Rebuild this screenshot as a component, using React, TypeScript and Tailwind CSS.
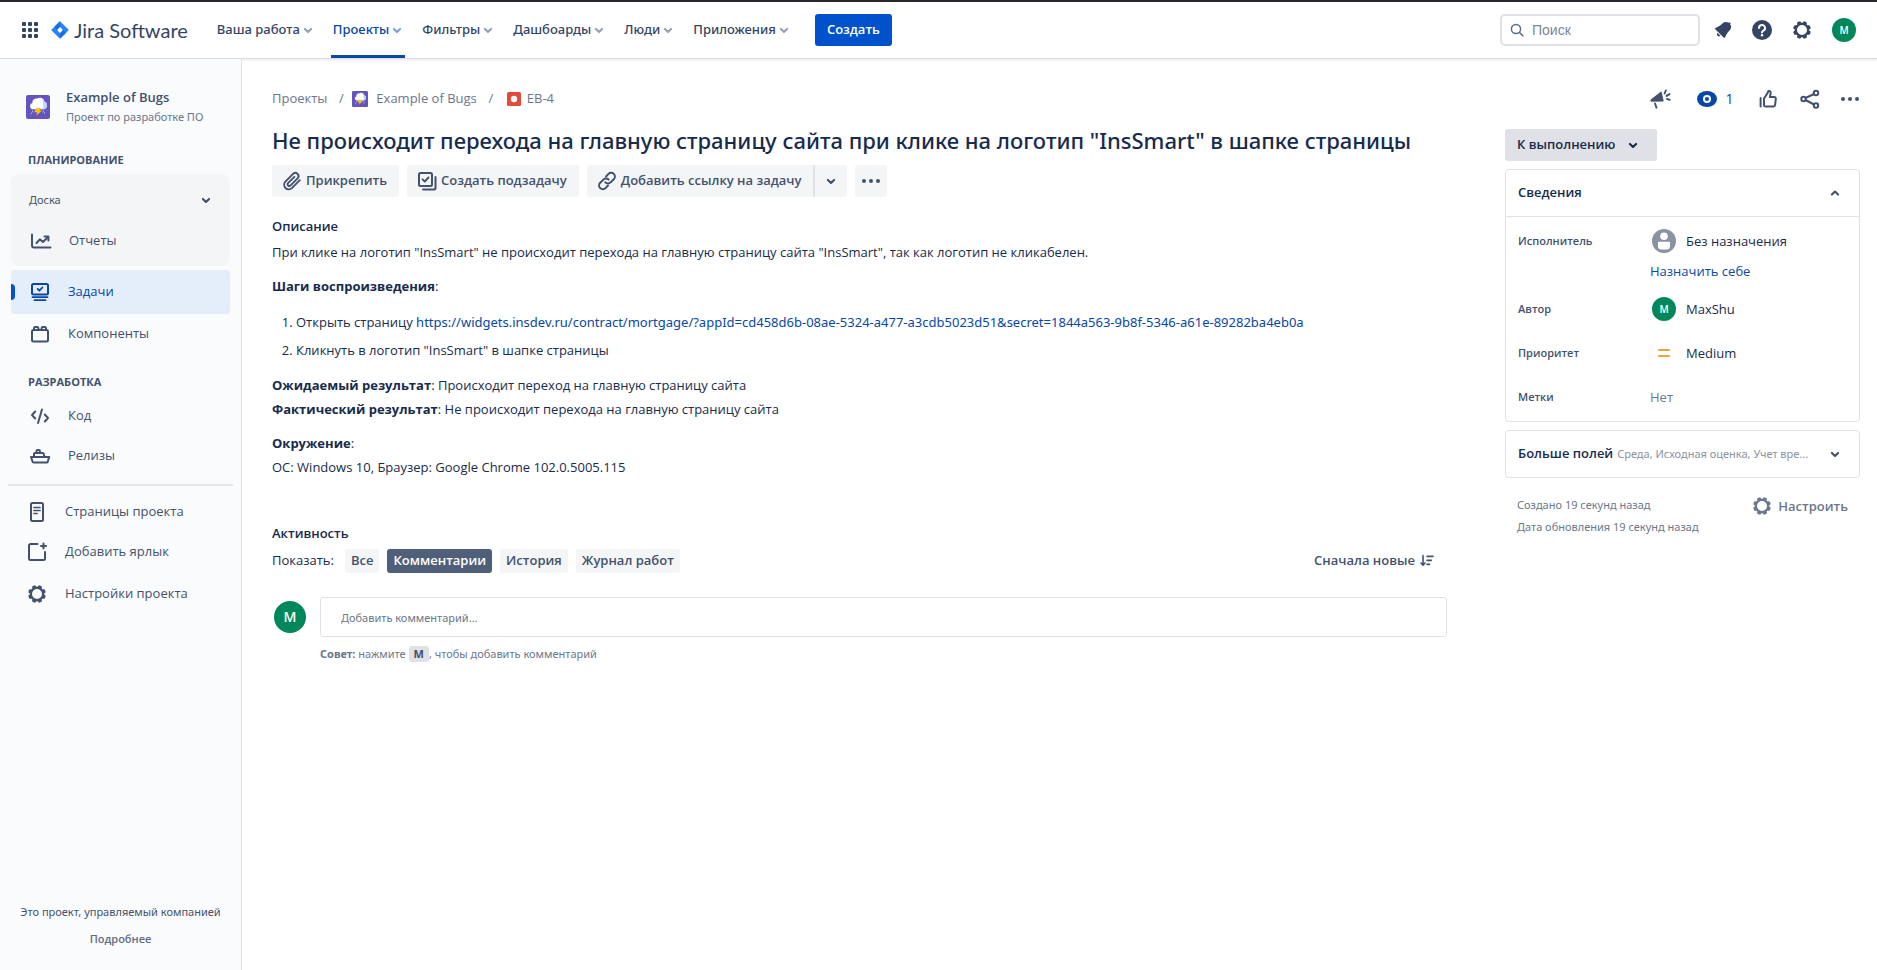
import React from "react";

type IconProps = { className?: string };

function Svg({ className = "size-6", children }: IconProps & { children: React.ReactNode }) {
  return (
    <svg viewBox="0 0 24 24" fill="none" className={`shrink-0 ${className}`} aria-hidden="true">
      {children}
    </svg>
  );
}

function ChevronDown({ className = "size-6" }: IconProps) {
  return (
    <Svg className={className}>
      <path d="M8.9 10.9l3.1 3.1 3.1-3.1" stroke="currentColor" strokeWidth="2.1" strokeLinecap="round" strokeLinejoin="round" />
    </Svg>
  );
}

function ChevronUp() {
  return (
    <Svg>
      <path d="M8.9 13.6l3.1-3.1 3.1 3.1" stroke="currentColor" strokeWidth="2.1" strokeLinecap="round" strokeLinejoin="round" />
    </Svg>
  );
}

function AppsIcon() {
  return (
    <Svg>
      {[4, 10, 16].map((y) =>
        [4, 10, 16].map((x) => <rect key={`${x}-${y}`} x={x} y={y} width="4" height="4" rx="1" fill="currentColor" />),
      )}
    </Svg>
  );
}

function JiraMark() {
  return (
    <svg viewBox="0 0 18 18" className="size-[18px] shrink-0" aria-hidden="true">
      <path d="M9 0.2l8.4 8.2a0.9 0.9 0 0 1 0 1.2L9 17.8 0.6 9.6a0.9 0.9 0 0 1 0-1.2z" fill="#2684FF" />
      <path d="M9 0.2v5.6L5.6 9.2 3.4 5.7z" fill="#1B6BE8" />
      <path d="M9 17.8v-5.6l3.4-3.4 2.2 3.5z" fill="#1B6BE8" />
      <path d="M9 6.1L11.9 9 9 11.9 6.1 9z" fill="#fff" />
    </svg>
  );
}

function BellIcon() {
  return (
    <Svg>
      <path
        fill="currentColor"
        d="M6.485 17.669a2 2 0 002.829 0l-2.829-2.83a2 2 0 000 2.83zm4.897-12.191l-.725.725c-.782.782-2.21 1.813-3.206 2.311l-3.017 1.509c-.495.248-.584.774-.187 1.171l8.556 8.556c.398.396.922.313 1.171-.188l1.51-3.016c.494-.988 1.526-2.42 2.311-3.206l.725-.726a5.048 5.048 0 00.64-6.356 1.01 1.01 0 10-1.354-1.494c-.023.025-.046.049-.066.075a5.043 5.043 0 00-2.788-.84 5.036 5.036 0 00-3.57 1.478z"
      />
    </Svg>
  );
}

function HelpIcon() {
  return (
    <Svg>
      <circle cx="12" cy="12" r="10" fill="currentColor" />
      <path d="M9 10a3 3 0 1 1 4.4 2.6c-.9.5-1.4.9-1.4 1.9" stroke="#fff" strokeWidth="2" strokeLinecap="round" />
      <circle cx="12" cy="17.3" r="1.2" fill="#fff" />
    </Svg>
  );
}

function GearIcon() {
  return (
    <Svg>
      <circle cx="12" cy="12" r="6.1" stroke="currentColor" strokeWidth="2.2" />
      {[0, 45, 90, 135, 180, 225, 270, 315].map((a) => (
        <path key={a} d="M9.6 5.6L10.1 3.9Q10.4 3.1 11.1 3.1H12.9Q13.6 3.1 13.9 3.9L14.4 5.6z" fill="currentColor" transform={`rotate(${a + 22.5} 12 12)`} />
      ))}
    </Svg>
  );
}

function StormIcon({ className = "size-6" }: IconProps) {
  return (
    <svg viewBox="0 0 24 24" className={`shrink-0 ${className}`} aria-hidden="true">
      <rect width="24" height="24" rx="2" fill="#6554C0" />
      <path d="M7 14.200a3.100 3.100 0 0 1-.6-6.100 4.200 4.200 0 0 1 4.800-4.600 4.800 4.800 0 0 1 7.300 3 4 4 0 0 1-.9 7.700z" fill="#fff" />
      <path d="M15.600 3.400a4.800 4.800 0 0 1 2.900 3.100 4 4 0 0 1-.9 7.700h-1.800c2-1.500 2.300-3.600 1.200-5.400.4-2-.2-3.800-1.400-5.400z" fill="#B3D4FF" />
      <path d="M10.500 13h4.300l-1.300 2.500h2.700L10.300 20.500l1-3.200H8.200z" fill="#FFC400" />
      <path d="M6.800 15.800l-.5 1.300M17.500 15.800l-.5 1.300M18.600 17.400l-.3.900M5.400 18l-.3.900" stroke="#9DB8F5" strokeWidth="1" strokeLinecap="round" />
    </svg>
  );
}

function PaperclipIcon() {
  return (
    <Svg>
      <path
        d="M19.800 11.200l-7.900 7.900a4.600 4.600 0 0 1-6.500-6.500l7.900-7.900a3.200 3.200 0 0 1 4.500 4.500l-7.400 7.400a1.700 1.700 0 0 1-2.400-2.400l6.400-6.400"
        stroke="currentColor"
        strokeWidth="1.900"
        strokeLinecap="round"
        strokeLinejoin="round"
      />
    </Svg>
  );
}

function SubtaskIcon() {
  return (
    <Svg>
      <rect x="4" y="4" width="13" height="13" rx="1.500" stroke="currentColor" strokeWidth="2" />
      <path d="M7.600 10.300l2.200 2.200 3.700-4" stroke="currentColor" strokeWidth="1.900" strokeLinecap="round" strokeLinejoin="round" />
      <path d="M20.500 8v11a1.500 1.500 0 0 1-1.500 1.500H8" stroke="currentColor" strokeWidth="2" strokeLinecap="round" />
    </Svg>
  );
}

function LinkIcon() {
  return (
    <Svg>
      <g stroke="currentColor" strokeWidth="2" strokeLinecap="round" strokeLinejoin="round">
        <path d="M11 7.500l2.500-2.600a3.700 3.700 0 0 1 5.300 5.300l-3.200 3.200a3.700 3.700 0 0 1-5.300 0" />
        <path d="M13 16.500l-2.500 2.600a3.700 3.700 0 0 1-5.300-5.300l3.200-3.200a3.700 3.700 0 0 1 5.300 0" />
      </g>
    </Svg>
  );
}

function MoreIcon() {
  return (
    <Svg>
      <circle cx="5" cy="12" r="2" fill="currentColor" />
      <circle cx="12" cy="12" r="2" fill="currentColor" />
      <circle cx="19" cy="12" r="2" fill="currentColor" />
    </Svg>
  );
}

function ReportsIcon() {
  return (
    <Svg>
      <g stroke="currentColor" strokeWidth="2" strokeLinecap="round" strokeLinejoin="round">
        <path d="M3 5.500v11a2 2 0 0 0 2 2h16.500" />
        <path d="M7.500 14l3.300-3.700 3.200 2.700 5-5" />
        <path d="M15.500 7.500h3.900v3.900" />
      </g>
    </Svg>
  );
}

function IssuesIcon() {
  return (
    <Svg>
      <rect x="4" y="4" width="16" height="10.500" rx="1.500" stroke="currentColor" strokeWidth="2" />
      <path d="M9.700 9l1.700 1.700 3-3.200" stroke="currentColor" strokeWidth="1.800" strokeLinecap="round" strokeLinejoin="round" />
      <path d="M4.500 17.200h15M6.500 20.200h11" stroke="currentColor" strokeWidth="1.800" strokeLinecap="round" />
    </Svg>
  );
}

function ComponentsIcon() {
  return (
    <Svg>
      <rect x="4" y="8" width="16" height="11.500" rx="1.500" stroke="currentColor" strokeWidth="2" />
      <path d="M6 8V6.300A1.200 1.200 0 0 1 7.200 5.100h2A1.200 1.200 0 0 1 10.400 6.300V8M13.600 8V6.300a1.200 1.200 0 0 1 1.200-1.200h2A1.200 1.200 0 0 1 18 6.300V8" stroke="currentColor" strokeWidth="2" />
    </Svg>
  );
}

function CodeIcon() {
  return (
    <Svg>
      <path d="M7.200 7.500L4 11l3.200 3.500M16.800 10.500L20 14l-3.200 3.500M14 5.500L10 19" stroke="currentColor" strokeWidth="2" strokeLinecap="round" strokeLinejoin="round" />
    </Svg>
  );
}

function ShipIcon() {
  return (
    <Svg>
      <g stroke="currentColor" strokeWidth="2" strokeLinejoin="round">
        <path d="M3 13h18.200l-1.500 4.700a1 1 0 0 1-1 .8H5.500a1 1 0 0 1-.9-.7z" />
        <path d="M6 13V9.800a.8.800 0 0 1 .8-.8h8a.8.800 0 0 1 .8.800l1 3.200" />
        <path d="M8.500 9V7a1 1 0 0 1 1-1h1.400a1 1 0 0 1 1 1v2" />
      </g>
    </Svg>
  );
}

function PageIcon() {
  return (
    <Svg>
      <rect x="6" y="3" width="12" height="18" rx="1.500" stroke="currentColor" strokeWidth="2" />
      <path d="M9 7.500h6M9 10.500h6M9 13.500h3" stroke="currentColor" strokeWidth="1.700" strokeLinecap="round" />
    </Svg>
  );
}

function AddItemIcon() {
  return (
    <Svg>
      <path d="M12.500 4H5.500A1.500 1.500 0 0 0 4 5.500v13A1.500 1.500 0 0 0 5.500 20h13a1.500 1.500 0 0 0 1.500-1.500V12" stroke="currentColor" strokeWidth="2" strokeLinecap="round" />
      <path d="M18.500 3.500v5M16 6h5" stroke="currentColor" strokeWidth="2" strokeLinecap="round" />
    </Svg>
  );
}

function MegaphoneIcon() {
  return (
    <Svg>
      <path d="M13.700 5.200l1.900 8.300a.8.800 0 0 1-.8 1L3.400 14.700a1 1 0 0 1-.9-.6l-.1-.5a1 1 0 0 1 .4-1.100L12.400 4.900a.8.800 0 0 1 1.300.3z" fill="currentColor" />
      <path d="M7 16.500l1.500 4.200M16.600 6.500l1.200-3M18.500 8.900l3-1.800M19 12l2.800.8" stroke="currentColor" strokeWidth="1.900" strokeLinecap="round" />
    </Svg>
  );
}

function WatchIcon() {
  return (
    <Svg>
      <ellipse cx="12" cy="12" rx="10" ry="8" fill="currentColor" />
      <circle cx="12" cy="12" r="3" stroke="#fff" strokeWidth="2" />
    </Svg>
  );
}

function LikeIcon() {
  return (
    <Svg>
      <path d="M4.600 11v8.500" stroke="currentColor" strokeWidth="2" strokeLinecap="round" />
      <path
        d="M8 18.500v-7l3.700-5.600.3-1.200c.4-1.200 2.800-.9 2.700 1.300 0 1.300-.5 2.700-.9 4h4.400a1.600 1.600 0 0 1 1.600 1.800l-.7 6.100a1.600 1.600 0 0 1-1.600 1.500H9a1 1 0 0 1-1-.9z"
        stroke="currentColor"
        strokeWidth="2"
        strokeLinejoin="round"
      />
    </Svg>
  );
}

function ShareIcon() {
  return (
    <Svg>
      <g stroke="currentColor" strokeWidth="2">
        <circle cx="5.500" cy="12" r="2.200" />
        <circle cx="18" cy="6" r="2.200" />
        <circle cx="18" cy="18.500" r="2.200" />
        <path d="M7.500 11L16 7M7.500 13l8.500 4.500" />
      </g>
    </Svg>
  );
}

function SortIcon() {
  return (
    <Svg className="size-4">
      <path d="M6 4v14M3 15l3 3.200L9 15M12 5h9M12 11h6.500M12 17h4" stroke="currentColor" strokeWidth="2.400" strokeLinecap="round" strokeLinejoin="round" />
    </Svg>
  );
}

function PersonIcon() {
  return (
    <Svg>
      <circle cx="12" cy="12" r="12" fill="#8993A4" />
      <circle cx="12" cy="7.300" r="3.800" fill="#fff" />
      <path d="M6 12.800h12v4.500a3.200 3.200 0 0 1-3.200 3.200H9.200A3.200 3.200 0 0 1 6 17.300z" fill="#fff" />
    </Svg>
  );
}

function PriorityIcon() {
  return (
    <Svg>
      <path d="M7 9h10M7 15h10" stroke="#E2A93B" strokeWidth="2" strokeLinecap="round" />
    </Svg>
  );
}

function Avatar({ large = false }: { large?: boolean }) {
  return (
    <span
      className={
        large
          ? "flex size-8 shrink-0 items-center justify-center rounded-full bg-[#00875A] text-sm font-semibold text-white"
          : "flex size-6 shrink-0 items-center justify-center rounded-full bg-[#00875A] text-[10px] font-semibold text-white"
      }
    >
      M
    </span>
  );
}

const navItems = [
  { label: "Ваша работа", active: false },
  { label: "Проекты", active: true },
  { label: "Фильтры", active: false },
  { label: "Дашбоарды", active: false },
  { label: "Люди", active: false },
  { label: "Приложения", active: false },
];

function Header() {
  return (
    <header className="border-b border-[#D9DBE0] bg-white shadow-[0_1px_2px_rgba(9,30,66,0.1)]">
      <div className="h-[2px] bg-[#24262c]" />
      <div className="flex h-14 items-stretch pr-[17px] pl-[18px]">
        <button type="button" aria-label="Переключить приложение" className="flex items-center text-[#344563]">
          <AppsIcon />
        </button>
        <a href="#home" className="ml-[9px] flex items-center gap-[5px] text-[20px] text-[#344563]">
          <JiraMark />
          <span className="font-['Lato',sans-serif]">Jira Software</span>
        </a>
        <nav className="ml-[27px] flex items-stretch gap-[15px]">
          {navItems.map((item) => (
            <button
              key={item.label}
              type="button"
              className={
                item.active
                  ? "flex items-center gap-[2px] border-b-3 border-[#0747A6] px-[2px] pt-[3px] font-['Noto_Sans','Open_Sans',sans-serif] text-[13px] font-medium text-[#0747A6]"
                  : "flex items-center gap-[2px] px-[2px] font-['Noto_Sans','Open_Sans',sans-serif] text-[13px] font-medium text-[#344563]"
              }
            >
              {item.label}
              <span className="flex w-3 justify-center opacity-50">
                <ChevronDown />
              </span>
            </button>
          ))}
        </nav>
        <button type="button" className="ml-[23px] h-8 self-center rounded-[3px] bg-[#0052CC] px-3 text-[13px] font-semibold text-white">
          Создать
        </button>
        <div className="ml-auto flex items-center gap-2">
          <div className="flex h-8 w-[200px] items-center rounded-[5px] border-2 border-[#DFE1E6] px-2 text-[#5E6C84]">
            <svg viewBox="0 0 14 14" fill="none" className="size-[14px] shrink-0" aria-hidden="true">
              <circle cx="6" cy="6" r="4.600" stroke="currentColor" strokeWidth="1.500" />
              <path d="M9.500 9.500L12.800 12.800" stroke="currentColor" strokeWidth="1.600" strokeLinecap="round" />
            </svg>
            <input
              type="search"
              aria-label="Поиск"
              placeholder="Поиск"
              className="ml-2 w-full min-w-0 bg-transparent font-['Liberation_Sans',sans-serif] text-sm outline-none placeholder:text-[#7A869A]"
            />
          </div>
          <div className="flex items-center gap-2 pr-[2px] text-[#344563]">
            <button type="button" aria-label="Уведомления" className="flex w-[30px] justify-center">
              <BellIcon />
            </button>
            <button type="button" aria-label="Справка" className="flex size-8 items-center justify-center">
              <HelpIcon />
            </button>
            <button type="button" aria-label="Настройки" className="flex size-8 items-center justify-center">
              <GearIcon />
            </button>
          </div>
          <button type="button" aria-label="Профиль" className="flex size-8 items-center justify-center">
            <Avatar />
          </button>
        </div>
      </div>
    </header>
  );
}

function SideLink({ icon, label, className }: { icon: React.ReactNode; label: string; className: string }) {
  return (
    <a href="#section" className={`flex items-center text-[13px] ${className}`}>
      {icon}
      {label}
    </a>
  );
}

const smallText = "font-['Noto_Sans','Open_Sans',sans-serif] text-[11px]";

function Sidebar() {
  return (
    <aside className="flex w-[242px] shrink-0 flex-col border-r border-[#DFE1E6] bg-[#FAFBFC] text-[#42526E]">
      <div className="flex items-center gap-4 pt-[28px] pl-[26px]">
        <StormIcon />
        <div>
          <div className="text-[13px] leading-5 font-semibold">Example of Bugs</div>
          <div className={`${smallText} leading-5 text-[#6B778C]`}>Проект по разработке ПО</div>
        </div>
      </div>
      <h2 className="mt-[25px] pl-7 text-[11px] leading-4 font-bold">ПЛАНИРОВАНИЕ</h2>
      <div className="mx-[11px] mt-[6px] rounded-lg bg-[#F4F5F7] pb-[3px]">
        <button type="button" className={`${smallText} flex h-11 w-full items-center justify-between pt-2 pr-3 pl-[18px]`}>
          Доска
          <ChevronDown />
        </button>
        <SideLink icon={<ReportsIcon />} label="Отчеты" className="h-[45px] gap-4 pl-[18px]" />
      </div>
      <div className="mx-[11px] mt-1 flex h-11 items-center rounded-[3px] bg-[#E4EEFB]">
        <span className="h-4 w-1 rounded-r-sm bg-[#0052CC]" />
        <SideLink icon={<IssuesIcon />} label="Задачи" className="grow gap-4 pl-[13px] text-[#0747A6]" />
      </div>
      <SideLink icon={<ComponentsIcon />} label="Компоненты" className="h-10 gap-4 pl-7" />
      <h2 className="mt-5 pl-7 text-[11px] leading-4 font-bold">РАЗРАБОТКА</h2>
      <SideLink icon={<CodeIcon />} label="Код" className="mt-[6px] h-10 gap-4 pl-7" />
      <SideLink icon={<ShipIcon />} label="Релизы" className="h-10 gap-4 pl-7" />
      <hr className="mx-2 mt-2 border-t-2 border-[#E3E5E9]" />
      <SideLink icon={<PageIcon />} label="Страницы проекта" className="mt-[6px] h-10 gap-4 pl-[25px]" />
      <SideLink icon={<AddItemIcon />} label="Добавить ярлык" className="h-10 gap-4 pl-[25px]" />
      <SideLink icon={<GearIcon />} label="Настройки проекта" className="h-11 gap-4 pl-[25px]" />
      <div className="mt-auto pb-[23px] text-center">
        <p className={`${smallText} leading-4`}>Это проект, управляемый компанией</p>
        <a href="#more" className="mt-[11px] block text-[11px] leading-4 font-semibold text-[#5E6C84]">
          Подробнее
        </a>
      </div>
    </aside>
  );
}

const toolButton = "flex h-8 items-center bg-[#F4F5F7] text-[13px] font-semibold text-[#42526E]";

function Issue() {
  return (
    <section className="min-w-0 flex-1 text-[#172B4D]">
      <nav className="flex h-8 items-center text-[13px] text-[#6B778C]">
        <a href="#projects">Проекты</a>
        <span className="mr-[5px] ml-2 w-3 text-center">/</span>
        <a href="#project" className="flex items-center gap-2">
          <StormIcon className="size-4" />
          Example of Bugs
        </a>
        <span className="mr-[5px] ml-2 w-3 text-center">/</span>
        <a href="#issue" className="ml-[5px] flex items-center gap-[6px]">
          <svg viewBox="0 0 14 14" className="size-[14px]" aria-hidden="true">
            <rect width="14" height="14" rx="1.500" fill="#E5493A" />
            <circle cx="7" cy="7" r="3.200" fill="#fff" />
          </svg>
          EB-4
        </a>
      </nav>
      <h1 className="mt-[11px] font-['Noto_Sans','Open_Sans',sans-serif] text-[22px] leading-7 font-medium">
        Не происходит перехода на главную страницу сайта при клике на логотип "InsSmart" в шапке страницы
      </h1>
      <div className="mt-[11px] flex gap-2">
        <button type="button" className={`${toolButton} gap-[2px] rounded-[3px] pr-3 pl-2`}>
          <PaperclipIcon />
          Прикрепить
        </button>
        <button type="button" className={`${toolButton} gap-[2px] rounded-[3px] pr-3 pl-2`}>
          <SubtaskIcon />
          Создать подзадачу
        </button>
        <div className="flex">
          <button type="button" className={`${toolButton} gap-[2px] rounded-l-[3px] pr-3 pl-2`}>
            <LinkIcon />
            Добавить ссылку на задачу
          </button>
          <button type="button" aria-label="Другие ссылки" className={`${toolButton} rounded-r-[3px] border-l-2 border-[#DFE1E6] px-1`}>
            <ChevronDown />
          </button>
        </div>
        <button type="button" aria-label="Ещё" className={`${toolButton} justify-center rounded-[3px] px-1`}>
          <MoreIcon />
        </button>
      </div>

      <h2 className="mt-[19px] text-[13px] leading-5 font-semibold">Описание</h2>
      <div className="mt-1 text-[13px] leading-6">
        <p>При клике на логотип "InsSmart" не происходит перехода на главную страницу сайта "InsSmart", так как логотип не кликабелен.</p>
        <p className="mt-[10px]">
          <b>Шаги воспроизведения</b>:
        </p>
        <ol className="mt-3 list-decimal space-y-1 pl-6">
          <li>
            Открыть страницу{" "}
            <a href="#mortgage" className="font-['Noto_Sans','Open_Sans',sans-serif] text-[#0747A6]">
              https://widgets.insdev.ru/contract/mortgage/?appId=cd458d6b-08ae-5324-a477-a3cdb5023d51&amp;secret=1844a563-9b8f-5346-a61e-89282ba4eb0a
            </a>
          </li>
          <li>Кликнуть в логотип "InsSmart" в шапке страницы</li>
        </ol>
        <p className="mt-[11px]">
          <b>Ожидаемый результат</b>: Происходит переход на главную страницу сайта
          <br />
          <b>Фактический результат</b>: Не происходит перехода на главную страницу сайта
        </p>
        <p className="mt-[10px]">
          <b>Окружение</b>:
          <br />
          ОС: Windows 10, Браузер: Google Chrome 102.0.5005.115
        </p>
      </div>

      <h2 className="mt-11 text-[13px] leading-5 font-semibold">Активность</h2>
      <div className="mt-[6px] flex items-center gap-2 text-[13px]">
        <span className="mr-[3px]">Показать:</span>
        {["Все", "Комментарии", "История", "Журнал работ"].map((tab) => (
          <button
            key={tab}
            type="button"
            className={
              tab === "Комментарии"
                ? "h-6 rounded-[3px] bg-[#505F79] px-[6px] font-semibold text-white"
                : "h-6 rounded-[3px] bg-[#F4F5F7] px-[6px] font-semibold text-[#42526E]"
            }
          >
            {tab}
          </button>
        ))}
        <button type="button" className="mr-3 ml-auto flex items-center gap-1 font-semibold text-[#42526E]">
          Сначала новые
          <SortIcon />
        </button>
      </div>
      <div className="mt-6 flex gap-[14px] pl-[2px]">
        <div className="pt-1">
          <Avatar large />
        </div>
        <div className="min-w-0 flex-1">
          <input
            type="text"
            aria-label="Добавить комментарий"
            placeholder="Добавить комментарий..."
            className={`${smallText} block h-10 w-full rounded-[3px] border border-[#DFE1E6] px-5 outline-none placeholder:text-[#6B778C]`}
          />
          <p className={`${smallText} mt-[9px] leading-4 text-[#6B778C]`}>
            <b>Совет:</b> нажмите{" "}
            <kbd className="inline-block rounded-[3px] bg-[#DFE1E6] px-[5px] font-['Open_Sans',sans-serif] font-bold text-[#42526E]">M</kbd>, чтобы добавить комментарий
          </p>
        </div>
      </div>
    </section>
  );
}

function Field({ label, children }: { label: string; children: React.ReactNode }) {
  return (
    <div className="flex min-h-11 items-start last:min-h-9">
      <dt className="w-33 shrink-0 text-[11px] leading-6 font-semibold text-[#42526E]">{label}</dt>
      <dd className="text-[13px] leading-6">{children}</dd>
    </div>
  );
}

function Details() {
  return (
    <aside className="w-[355px] shrink-0 text-[#172B4D]">
      <div className="-mr-[2px] flex h-8 items-center justify-end text-[#42526E]">
        <button type="button" aria-label="Отправить отзыв">
          <MegaphoneIcon />
        </button>
        <button type="button" aria-label="Наблюдатели" className="ml-[23px] flex items-center gap-1 text-sm text-[#0747A6]">
          <WatchIcon />
          <span className="w-[13px] text-center">1</span>
        </button>
        <button type="button" aria-label="Нравится" className="ml-5">
          <LikeIcon />
        </button>
        <button type="button" aria-label="Поделиться" className="ml-[18px]">
          <ShareIcon />
        </button>
        <button type="button" aria-label="Действия" className="ml-4">
          <MoreIcon />
        </button>
      </div>
      <button type="button" className="mt-[14px] flex h-8 items-center gap-[6px] rounded-[3px] bg-[#DFE1E6] pr-3 pl-3 text-[13px] font-semibold">
        К выполнению
        <ChevronDown />
      </button>
      <div className="mt-2 rounded-[4px] border border-[#DFE1E6]">
        <button type="button" className="flex h-[47px] w-full items-center justify-between border-b border-[#DFE1E6] pr-3 pl-3 text-[13px] font-semibold">
          Сведения
          <span className="text-[#42526E]">
            <ChevronUp />
          </span>
        </button>
        <dl className="px-3 pt-3">
          <Field label="Исполнитель">
            <div className="flex items-center gap-[10px] pl-[2px]">
              <PersonIcon />
              Без назначения
            </div>
            <a href="#assign" className="mt-[6px] mb-[14px] block text-[#0747A6]">
              Назначить себе
            </a>
          </Field>
          <Field label="Автор">
            <div className="flex items-center gap-[10px] pl-[2px]">
              <Avatar />
              MaxShu
            </div>
          </Field>
          <Field label="Приоритет">
            <div className="flex items-center gap-[10px] pl-[2px]">
              <PriorityIcon />
              Medium
            </div>
          </Field>
          <Field label="Метки">
            <span className="text-[#6B778C]">Нет</span>
          </Field>
        </dl>
      </div>
      <button type="button" className="mt-2 flex h-12 w-full items-center rounded-[4px] border border-[#DFE1E6] px-3 text-left">
        <span className="shrink-0 text-[13px] font-semibold">Больше полей</span>
        <span className={`${smallText} ml-1 whitespace-nowrap text-[#8993A4]`}>Среда, Исходная оценка, Учет вре...</span>
        <span className="ml-auto text-[#42526E]">
          <ChevronDown />
        </span>
      </button>
      <div className={`${smallText} mt-4 flex items-start justify-between pr-3 pl-3 leading-[22px] text-[#6B778C]`}>
        <div>
          <p>Создано 19 секунд назад</p>
          <p>Дата обновления 19 секунд назад</p>
        </div>
        <button type="button" className="flex items-center gap-1 font-['Open_Sans',sans-serif] text-[13px] leading-6 font-semibold">
          <GearIcon />
          Настроить
        </button>
      </div>
    </aside>
  );
}

export default function App() {
  return (
    <div className="flex min-h-screen flex-col bg-white font-['Open_Sans','Noto_Sans',sans-serif]">
      <Header />
      <div className="flex flex-1">
        <Sidebar />
        <main className="flex min-w-0 flex-1 gap-[58px] pt-6 pr-[17px] pl-[30px]">
          <Issue />
          <Details />
        </main>
      </div>
    </div>
  );
}
